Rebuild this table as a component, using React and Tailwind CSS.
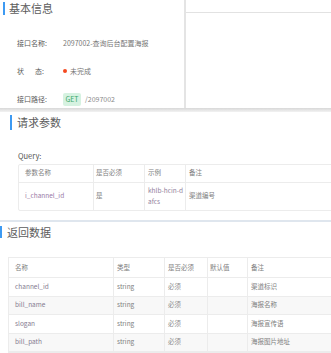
import React from 'react';

const font = { fontFamily: '"Noto Sans CJK SC", "Noto Sans", sans-serif' };

const info = [
  { label: '接口名称:', value: <span className="text-[#777]">2097002-查询后台配置海报</span> },
  {
    label: <span>状<span className="inline-block w-[11px]" />态:</span>,
    value: (
      <span className="flex items-center text-[#777]">
        <span className="mr-[3px] inline-block h-[4px] w-[4px] rounded-full bg-[#f5491f]" />
        未完成
      </span>
    ),
  },
  {
    label: '接口路径:',
    value: (
      <span className="flex items-center">
        <span className="flex h-[13px] w-[18px] items-center justify-center rounded-[2px] bg-[#d6f2e1] text-[7px] text-[#3aa86a]">
          GET
        </span>
        <span className="ml-[4px] text-[#888]">/2097002</span>
      </span>
    ),
  },
];

const returnRows = [
  ['channel_id', 'string', '必须', '', '渠道标识'],
  ['bill_name', 'string', '必须', '', '海报名称'],
  ['slogan', 'string', '必须', '', '海报宣传语'],
  ['bill_path', 'string', '必须', '', '海报图片地址'],
];

const SectionTitle = ({ children, barClass, textClass }) => (
  <div className="flex items-center">
    <span className={`block w-[2px] bg-[#3d9af2] ${barClass}`} />
    <span className={`text-[11px] leading-none text-[#5c5c5c] ${textClass}`}>{children}</span>
  </div>
);

export default function App() {
  return (
    <div className="relative h-[353px] w-[331px] overflow-hidden bg-white" style={font}>
      {/* 基本信息 */}
      <div className="flex h-[108px]">
        <div className="w-[186px] border-r-[2px] border-[#e4e4e4] pt-[2px]">
          <SectionTitle barClass="ml-[3px] h-[13px]" textClass="ml-[4px]">基本信息</SectionTitle>
          <div className="mt-[24px] flex flex-col gap-[20px] pl-[17px] text-[7px] leading-[8px] text-[#5a5a5a]">
            {info.map((row, i) => (
              <div key={i} className="flex h-[8px] items-center">
                <span className="w-[46px]">{row.label}</span>
                {row.value}
              </div>
            ))}
          </div>
        </div>
        <div className="flex-1">
          <div className="h-[13px] border-b border-[#e2e2e2]" />
        </div>
      </div>
      <div className="h-[4px] bg-gradient-to-b from-[#d8d8d8] to-[#f2f2f2]" />

      {/* 请求参数 */}
      <div className="h-[108px] pt-[3px]">
        <SectionTitle barClass="ml-[10px] h-[15px]" textClass="ml-[5px]">请求参数</SectionTitle>
        <div className="ml-[18px] mt-[22px] text-[7.5px] leading-none text-[#555]">Query:</div>
        <div className="ml-[18px] mt-[4px] w-[340px] rounded-[2px] border border-[#ececec] text-[6.5px] text-[#808080]">
          <div className="grid h-[18px] grid-cols-[75px_51px_41px_1fr] items-stretch border-b border-[#ececec]">
            <div className="flex items-center border-r border-[#ececec] pl-[6px]">参数名称</div>
            <div className="flex items-center border-r border-[#ececec] pl-[2px]">是否必须</div>
            <div className="flex items-center border-r border-[#ececec] pl-[3px]">示例</div>
            <div className="flex items-center pl-[3px]">备注</div>
          </div>
          <div className="grid h-[27px] grid-cols-[75px_51px_41px_1fr] items-stretch">
            <div className="flex items-center border-r border-[#ececec] pl-[6px] text-[#9a7aa6]">i_channel_id</div>
            <div className="flex items-center border-r border-[#ececec] pl-[2px]">是</div>
            <div className="flex flex-col justify-center border-r border-[#ececec] pl-[3px] leading-[11px] text-[#927f9c]">
              <span>khlb-hcin-d</span>
              <span>afcs</span>
            </div>
            <div className="flex items-center pl-[3px]">渠道编号</div>
          </div>
        </div>
      </div>
      <div className="h-[2px] bg-[#dfe6ee]" />

      {/* 返回数据 */}
      <div className="pt-[4px]">
        <SectionTitle barClass="h-[12px]" textClass="ml-[5px]">返回数据</SectionTitle>
        <div className="ml-[8px] mt-[19px] w-[360px] border border-[#ececec] text-[6.5px] text-[#808080]">
          <div className="grid h-[20px] grid-cols-[105px_51px_43px_40px_1fr] border-b border-[#ececec]">
            <div className="flex items-center border-r border-[#ececec] pl-[6px]">名称</div>
            <div className="flex items-center border-r border-[#ececec] pl-[3px]">类型</div>
            <div className="flex items-center border-r border-[#ececec] pl-[3px]">是否必须</div>
            <div className="flex items-center border-r border-[#ececec] pl-[2px]">默认值</div>
            <div className="flex items-center pl-[3px]">备注</div>
          </div>
          {returnRows.map((row, i) => (
            <div
              key={row[0]}
              className={`grid h-[18.5px] grid-cols-[105px_51px_43px_40px_1fr] border-b border-[#ececec] ${
                i % 2 === 1 ? 'bg-[#f8f8f8]' : 'bg-white'
              }`}
            >
              <div className="flex items-center border-r border-[#ececec] pl-[6px] text-[#857b90]">{row[0]}</div>
              <div className="flex items-center border-r border-[#ececec] pl-[3px]">{row[1]}</div>
              <div className="flex items-center border-r border-[#ececec] pl-[3px] text-[#8c8c8c]">{row[2]}</div>
              <div className="flex items-center border-r border-[#ececec] pl-[2px]">{row[3]}</div>
              <div className="flex items-center pl-[3px]">{row[4]}</div>
            </div>
          ))}
        </div>
      </div>
    </div>
  );
}
